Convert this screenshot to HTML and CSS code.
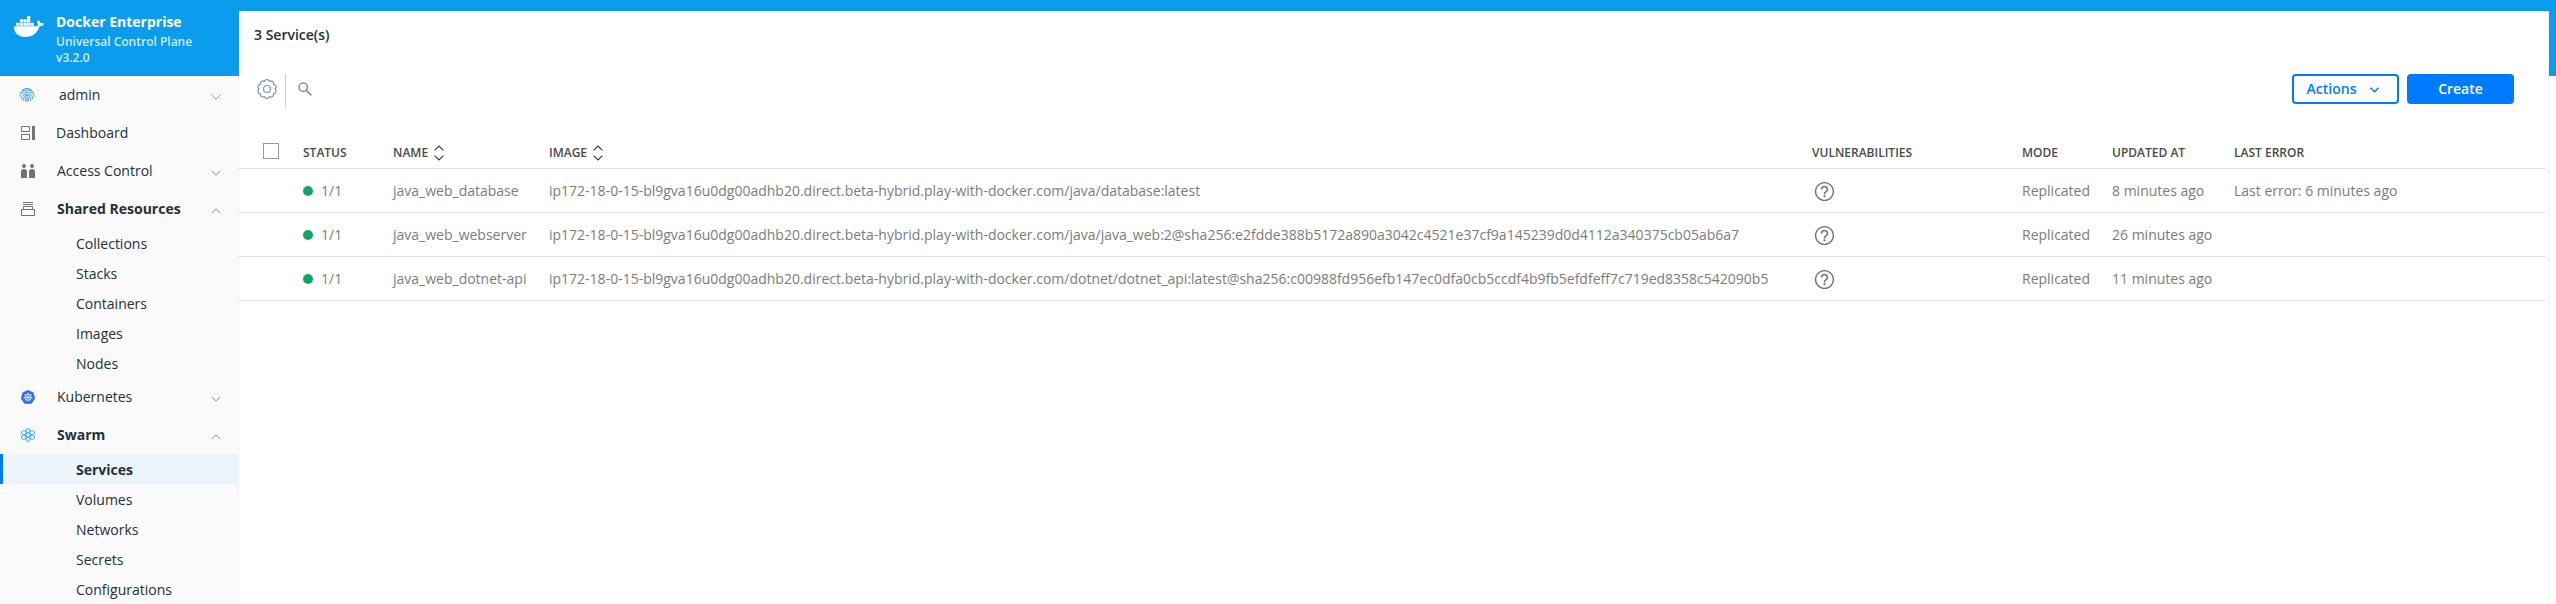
FILE: index.html
```
<!DOCTYPE html>
<html lang="en">
<head>
<meta charset="utf-8">
<title>Docker Enterprise</title>
<link rel="stylesheet" href="styles.css">
</head>
<body>
<svg width="0" height="0" class="defs">
  <symbol id="down" viewBox="0 0 10 6"><path d="M.6.8 5 5.1 9.4.8" fill="none" stroke="currentColor"/></symbol>
  <symbol id="up" viewBox="0 0 10 6"><path d="M.6 5.2 5 .9 9.4 5.2" fill="none" stroke="currentColor"/></symbol>
  <symbol id="sort" viewBox="0 0 10 16"><path d="M.6 5.3 5 1 9.4 5.3M.6 10.7 5 15 9.4 10.7" fill="none" stroke="currentColor" stroke-width="1.1"/></symbol>
  <symbol id="help" viewBox="0 0 24 24"><path fill="currentColor" d="M11 18h2v-2h-2v2zm1-16C6.480 2 2 6.480 2 12s4.480 10 10 10 10-4.480 10-10S17.520 2 12 2zm0 18.500c-4.700 0-8.500-3.800-8.500-8.500s3.800-8.500 8.500-8.500 8.500 3.800 8.500 8.500-3.800 8.500-8.500 8.500zm0-14.500c-2.210 0-4 1.790-4 4h1.700c0-1.300 1-2.400 2.300-2.400s2.300 1.100 2.300 2.400c0 2-3.100 1.750-3.100 5h1.700c0-2.250 3.100-2.500 3.100-5 0-2.210-1.790-4-4-4z"/></symbol>
</svg>
<div class="app">
  <aside class="sidebar">
    <header class="brand">
      <svg class="whale" width="30" height="22" viewBox="0 0 30 22" fill="#fff"><path d="M0 10.300H21.700C23.300 10.300 24.200 9.600 24.400 8.800 23.100 7.500 22.900 5.600 24.200 4 25.400 4.800 26.100 5.800 26.300 7 27.700 6.700 29 7 30 7.700 29.200 9.500 27.600 10.200 25.600 10.200 23.200 17 18.300 21 11.400 21 3.700 21 .1 17 0 10.300Z"/><path d="M2.300 6.700h3.200v3h-3.200zM5.900 6.700h3.200v3H5.900zM9.500 6.700h3.200v3H9.500zM13.100 6.700h3.200v3h-3.200zM16.700 6.700h3.200v3h-3.200zM5.900 3.300h3.200v3H5.900zM9.500 3.300h3.200v3H9.500zM13.100 3.300h3.200v3h-3.200zM13.100 0h3.200v2.900h-3.200z"/></svg>
      <div>
        <div class="brand-name">Docker Enterprise</div>
        <div class="brand-sub">Universal Control Plane</div>
        <div class="brand-sub">v3.2.0</div>
      </div>
    </header>
    <nav>
      <a class="item admin"><span class="ico"><svg width="16" height="14" viewBox="0 0 16 14" fill="none" stroke="#2f8df7" stroke-width=".9"><path d="M3 2.300Q8-1.300 13 2.300M.7 5.400C4 .7 12 .7 15.300 5.400M.5 8.500C2 2.500 14 2.500 15.500 8.500M2.400 11.200C2.200 4.200 13.800 4.200 13.600 11.200M4.400 12.600C3.200 5.800 12.800 5.800 11.600 12.600M6.400 13.500C5.300 7.300 10.700 7.300 9.600 13.500M8 9.800v4"/></svg></span><span class="label">admin</span><svg class="chev" width="10" height="6"><use href="#down"/></svg></a>
      <a class="item dash"><span class="ico"><svg width="14" height="14" viewBox="0 0 14 14" fill="none" stroke="#6c757d"><path d="M.5.500h8v5h-8zM.5 8.500h8v5h-8z"/><path d="M11 0h3v14h-3z" fill="#6c757d" stroke="none"/></svg></span><span class="label">Dashboard</span></a>
      <a class="item"><span class="ico"><svg width="14" height="14" viewBox="0 0 14 14" fill="#6c757d"><circle cx="3" cy="2" r="2"/><circle cx="11" cy="2" r="2"/><path d="M0 14V7.500Q0 5 3 5T6 7.500V14zM8 14V7.500Q8 5 11 5T14 7.500V14z"/></svg></span><span class="label">Access Control</span><svg class="chev" width="10" height="6"><use href="#down"/></svg></a>
      <a class="item open"><span class="ico"><svg width="14" height="14" viewBox="0 0 14 14" fill="none" stroke="#6c757d"><path d="M2 .5h10M2 2.500h10M2.500 7.500v-3h9v3M.5 7.500h13v6H.5z"/></svg></span><span class="label">Shared Resources</span><svg class="chev" width="10" height="6"><use href="#up"/></svg></a>
      <a class="sub">Collections</a>
      <a class="sub">Stacks</a>
      <a class="sub">Containers</a>
      <a class="sub">Images</a>
      <a class="sub">Nodes</a>
      <a class="item"><span class="ico"><svg width="14" height="14" viewBox="0 0 14 14"><path d="M7 .2 12.300 2.700 13.800 8.600 10.300 13.600H3.700L.2 8.600 1.700 2.700Z" fill="#326ce5" stroke="#326ce5" stroke-width=".6" stroke-linejoin="round"/><g stroke="#fff" stroke-width=".8" fill="none"><circle cx="7" cy="7.200" r="3.100"/><path stroke-width=".6" d="M7 2.400v4.800M7 7.200l3.800-3M7 7.200l4.700 1.100M7 7.200l2.100 4.400M7 7.200l-2.100 4.400M7 7.200l-4.700 1.100M7 7.200l-3.800-3"/></g></svg></span><span class="label">Kubernetes</span><svg class="chev" width="10" height="6"><use href="#down"/></svg></a>
      <a class="item open"><span class="ico"><svg width="14" height="14" viewBox="0 0 14 14" fill="#fff" stroke="#1ba1ef" stroke-width=".9"><path d="M7 4.700 9 5.850v2.300L7 9.300 5 8.150v-2.300ZM7 .4 8.900 1.500v2.100L7 4.700 5.100 3.600V1.500ZM7 9.300 8.900 10.400v2.100L7 13.600 5.100 12.500v-2.100ZM2.800 2.500 4.900 3.600v2.200L2.800 7 .6 5.800V3.600ZM11.200 2.500 13.400 3.600v2.200L11.200 7 9.100 5.800V3.600ZM2.800 7 4.900 8.200v2.200L2.800 11.500.6 10.400V8.200ZM11.200 7 13.400 8.200v2.200L11.200 11.500 9.100 10.400V8.200Z" stroke-linejoin="round"/></svg></span><span class="label">Swarm</span><svg class="chev" width="10" height="6"><use href="#up"/></svg></a>
      <a class="sub active">Services</a>
      <a class="sub">Volumes</a>
      <a class="sub">Networks</a>
      <a class="sub">Secrets</a>
      <a class="sub">Configurations</a>
    </nav>
  </aside>
  <div class="frame">
  <main class="main">
    <h1>3 Service(s)</h1>
    <div class="toolbar">
      <svg class="gear" width="20" height="20" viewBox="-10 -10 20 20" fill="none" stroke="#8197a6" stroke-width="1.200" stroke-linejoin="round"><path d="M2.470-7.610A2.600 2.600 0 0 1 6.470-4.700 2.600 2.600 0 0 1 8 0 2.600 2.600 0 0 1 6.470 4.700 2.600 2.600 0 0 1 2.470 7.610 2.600 2.600 0 0 1-2.470 7.610 2.600 2.600 0 0 1-6.470 4.700 2.600 2.600 0 0 1-8 0 2.600 2.600 0 0 1-6.470-4.700 2.600 2.600 0 0 1-2.470-7.610 2.600 2.600 0 0 1 2.470-7.610Z"/><circle r="3.500"/></svg>
      <span class="divider"></span>
      <svg class="search" width="14" height="14" viewBox="0 0 14 14" fill="none" stroke="#8197a6" stroke-width="1.600"><circle cx="5.200" cy="5.200" r="4.200"/><path d="m8.300 8.300 5 5" stroke-width="1.900"/></svg>
      <button class="btn outline"><span>Actions</span><svg width="9" height="6" viewBox="0 0 9 6" fill="none" stroke="currentColor" stroke-width="1.500"><path d="M.5.700 4.500 4.700 8.500.7"/></svg></button>
      <button class="btn solid">Create</button>
    </div>
    <div class="table">
      <div class="row head"><span><i class="box"></i></span><span>STATUS</span><span>NAME<svg class="sort" width="10" height="16"><use href="#sort"/></svg></span><span>IMAGE<svg class="sort" width="10" height="16"><use href="#sort"/></svg></span><span>VULNERABILITIES</span><span>MODE</span><span>UPDATED AT</span><span>LAST ERROR</span></div>
      <div class="row"><span></span><span><i class="dot"></i>1/1</span><span>java_web_database</span><span>ip172-18-0-15-bl9gva16u0dg00adhb20.direct.beta-hybrid.play-with-docker.com/java/database:latest</span><span><svg class="help" width="23" height="23"><use href="#help"/></svg></span><span>Replicated</span><span>8 minutes ago</span><span>Last error: 6 minutes ago</span></div>
      <div class="row"><span></span><span><i class="dot"></i>1/1</span><span>java_web_webserver</span><span>ip172-18-0-15-bl9gva16u0dg00adhb20.direct.beta-hybrid.play-with-docker.com/java/java_web:2@sha256:e2fdde388b5172a890a3042c4521e37cf9a145239d0d4112a340375cb05ab6a7</span><span><svg class="help" width="23" height="23"><use href="#help"/></svg></span><span>Replicated</span><span>26 minutes ago</span><span></span></div>
      <div class="row"><span></span><span><i class="dot"></i>1/1</span><span>java_web_dotnet-api</span><span>ip172-18-0-15-bl9gva16u0dg00adhb20.direct.beta-hybrid.play-with-docker.com/dotnet/dotnet_api:latest@sha256:c00988fd956efb147ec0dfa0cb5ccdf4b9fb5efdfeff7c719ed8358c542090b5</span><span><svg class="help" width="23" height="23"><use href="#help"/></svg></span><span>Replicated</span><span>11 minutes ago</span><span></span></div>
    </div>
  </main>
  </div>
</div>
</body>
</html>
```
FILE: styles.css
```
* { box-sizing: border-box; }
body { margin: 0; font: 14px/20px "Open Sans", sans-serif; color: #22313a; background: #fff; overflow: hidden; }
.defs { display: block; height: 0; }
.app { display: flex; height: 604px; }
.sidebar { width: 239px; background: #fafafa; flex: none; }
.brand { display: flex; height: 76px; background: #0b9ced; color: #fff; padding: 13px 0 0 14px; }
.whale { margin: 3px 12px 0 0; flex: none; }
.brand-name { font-weight: 700; line-height: 18px; height: 21px; }
.brand-sub { font-size: 12px; font-weight: 600; line-height: 16px; color: #d0ebfc; }
nav { border-right: 1px solid #eee; height: 528px; }
.item { display: flex; align-items: center; height: 38px; padding: 0 17px 0 20px; }
.ico { width: 37px; display: flex; padding-left: 1px; }
.admin .ico { width: 39px; padding-left: 0; margin-left: -1px; }
.admin .label { margin-left: 1px; }
.dash .ico { width: 36px; }
.label { flex: 1; }
.chev { color: #8a8f94; margin-top: 3px; }
.open .label { font-weight: 700; }
.sub { display: flex; align-items: center; height: 30px; padding: 1px 0 0 76px; }
.sub.active { background: #ebf3fb; font-weight: 700; border-left: 3px solid #007bff; padding-left: 73px; margin-right: -1px; }
.frame { flex: 1; min-width: 0; background: linear-gradient(#0b9ced 76px, #fff 76px); padding: 11px 8px 0 0; }
.main { height: 593px; background: #fff; box-shadow: 1px 0 #f2f2f2; clip-path: inset(65px -1px 0 0); clip-path: inset(0 -1px 0 0); }
h1 { margin: 0; padding: 14px 0 0 15px; font-size: 14px; line-height: 20px; font-weight: 600; height: 63px; }
.toolbar { display: flex; height: 34px; padding-right: 34px; }
.gear { margin: 5px 8px 0 18px; }
.divider { width: 1px; height: 34px; background: #ccd1d4; }
.search { margin: 8px auto 0 12px; }
.btn { display: flex; align-items: center; justify-content: center; width: 107px; height: 30px; border: 2px solid #007bff; border-radius: 4px; font: 600 14px/20px "Open Sans", sans-serif; padding: 0; }
.outline { background: #fff; color: #007bff; gap: 14px; margin-right: 8px; padding-right: 5px; }
.outline svg { margin-top: 2px; }
.solid { background: #007bff; color: #fff; }
.table { width: 2307px; margin-top: 17px; }
.row { display: grid; grid-template-columns: 64px 90px 156px 1263px 210px 90px 122px 312px; height: 44px; align-items: center; border-bottom: 1px solid #e2e2e2; color: #7c7c7c; }
.row > span { display: flex; align-items: center; white-space: nowrap; }
.row.head { height: 44px; color: #4a4a4a; font-size: 12px; font-weight: 600; padding-top: 12px; }
.box { width: 16px; height: 16px; border: 1px solid #8d9aa8; margin: -3px 0 0 24px; }
.sort { margin-left: 6px; color: #333; }
.dot { width: 10px; height: 10px; border-radius: 50%; background: #12a664; margin-right: 8px; }
.help { color: #6b757e; margin: 1px 0 0 1px; }
```
